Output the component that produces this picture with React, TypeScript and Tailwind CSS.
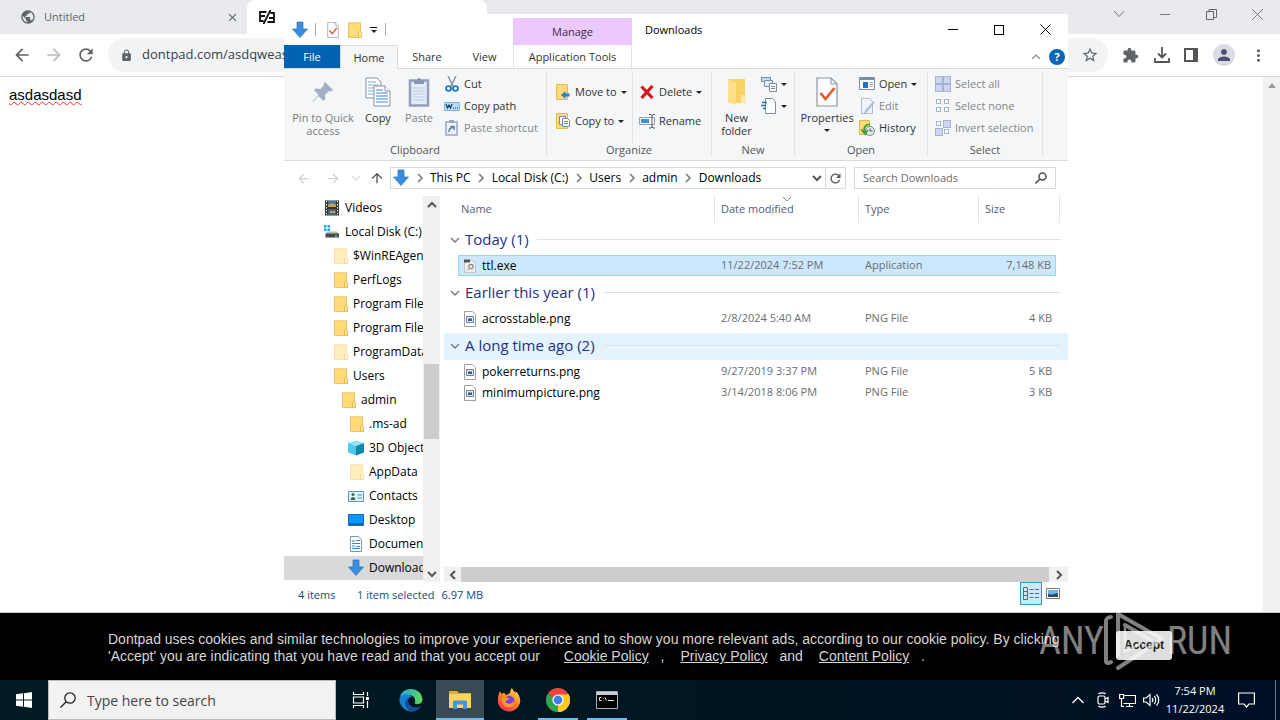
import type { ReactNode } from "react";
import {
  MdArrowBack,
  MdArrowForward,
  MdClose,
  MdExtension,
  MdLock,
  MdMoreVert,
  MdPerson,
  MdPublic,
  MdRefresh,
  MdStarBorder,
} from "react-icons/md";

type FolderItem = { name: string; icon: ReactNode; pad: string; active?: boolean };
type FileItem = { name: string; date: string; type: string; size: string; exe?: boolean; selected?: boolean };

/* ---------- icons ---------- */

function DownArrow({ className = "w-4 h-[18px]" }: { className?: string }) {
  return (
    <svg viewBox="0 0 16 18" className={className}>
      <path d="M5 1h6v7h4.5L8 16.5.5 8H5z" fill="#3a8ee0" stroke="#2a74c0" strokeWidth=".7" />
    </svg>
  );
}

function FolderIcon({ faded = false }: { faded?: boolean }) {
  return (
    <svg viewBox="0 0 14 16" className={`w-[14px] h-4 shrink-0 ${faded ? "opacity-50" : ""}`}>
      <path d="M.5.8h12v14.7H.5z" fill="#ffdc78" stroke="#e6b94b" strokeWidth=".8" />
      <path d="M10.5 11c0-2 3-2 3 0v4.6h-3z" fill="#ffe9a3" stroke="#e0ac35" strokeWidth=".8" />
    </svg>
  );
}

function Caret() {
  return (
    <svg viewBox="0 0 6 3" className="w-[6px] h-[3px] shrink-0">
      <path d="M0 0h6L3 3z" fill="#222" />
    </svg>
  );
}

function Chevron({ dir, className = "text-[#555]", width = 2 }: { dir: "up" | "down" | "left" | "right"; className?: string; width?: number }) {
  const paths = { up: "M1 7l4-4 4 4", down: "M1 3l4 4 4-4", left: "M7 1L3 5l4 4", right: "M3 1l4 4-4 4" };
  return (
    <svg viewBox="0 0 10 10" className={`w-[10px] h-[10px] shrink-0 ${className}`} fill="none" stroke="currentColor" strokeWidth={width}>
      <path d={paths[dir]} />
    </svg>
  );
}

function CheckDoc({ className }: { className: string }) {
  return (
    <svg viewBox="0 0 22 30" className={className} fill="none">
      <path d="M1 1h14l6 6v22H1z" fill="#fcfcfd" stroke="#8b96a5" strokeWidth="1.2" />
      <path d="M15 1v6h6" stroke="#8b96a5" />
      <path d="M4.500 16l5 6 9-11" stroke="#e0582f" strokeWidth="2.600" />
    </svg>
  );
}

function PinIcon() {
  return (
    <svg viewBox="0 0 24 24" className="w-6 h-6">
      <path d="M14 2l8 8-2 1.500-2-.5-4 4 .5 4-2 2-5-5L2 22l-.5-.5 6-6.500-4.500-5 2-1.500 4.500.5 3.500-4L12.500 4z" fill="#a3b0c3" />
    </svg>
  );
}

function CopyIcon() {
  return (
    <svg viewBox="0 0 26 30" className="w-[26px] h-[30px]" fill="#fff" stroke="#8292aa">
      <path d="M1 1h11l4 4v16H1z" />
      <path d="M3 5h8M3 8h11M3 11h11M3 14h11M3 17h11" stroke="#80a9dc" />
      <path d="M9 9h11l5 5v15H9z" />
      <path d="M20 9v5h5" />
      <path d="M11 13h7M11 16h12M11 19h12M11 22h12M11 25h12" stroke="#3f86dc" />
    </svg>
  );
}

function PasteIcon() {
  return (
    <svg viewBox="0 0 22 30" className="w-[22px] h-[30px]" fill="none">
      <path d="M2 3.500h18v25H2z" fill="#e3eaf8" stroke="#8fa0bb" strokeWidth="2.500" />
      <path d="M6 3h3l1-2h2l1 2h3v4H6z" fill="#8696ae" />
      <path d="M5 11h12M5 14h12M5 17h12M5 20h12M5 23h12" stroke="#bccbea" />
    </svg>
  );
}

function CutIcon() {
  return (
    <svg viewBox="0 0 16 16" className="w-4 h-4" fill="none">
      <path d="M4 0l5 10M12 0L7 10" stroke="#8190a2" strokeWidth="1.400" />
      <ellipse cx="4.500" cy="12.500" rx="2.500" ry="2.300" stroke="#1b7ac8" strokeWidth="1.800" />
      <ellipse cx="11.500" cy="12.500" rx="2.500" ry="2.300" stroke="#1b7ac8" strokeWidth="1.800" />
    </svg>
  );
}

function CopyPathIcon() {
  return (
    <svg viewBox="0 0 16 16" className="w-4 h-4" fill="none">
      <path d="M.5 4.500h15v8H.5z" fill="#b6dcfa" stroke="#7fb7e4" />
      <path d="M2 6l1.500 4L5 7l1.500 3L8 6M9 10h1M11 10h1M13 10h1" stroke="#1a3d68" strokeWidth="1.200" />
    </svg>
  );
}

function PasteShortcutIcon() {
  return (
    <svg viewBox="0 0 16 16" className="w-4 h-4" fill="none">
      <path d="M2 2h11v13H2z" fill="#edf1f9" stroke="#96a6c0" strokeWidth="1.500" />
      <path d="M5 0h5v3H5z" fill="#96a6c0" />
      <path d="M5 12c0-3 1-4.500 4-4.500M6.500 6.500H10V10" stroke="#5d7cab" strokeWidth="1.500" />
    </svg>
  );
}

function MoveToIcon() {
  return (
    <svg viewBox="0 0 14 16" className="w-[14px] h-4">
      <path d="M.5.500h11v15H.5z" fill="#ffdc78" stroke="#e6b94b" />
      <path d="M13.500 9.500h-4V7L5 11l4.500 4v-2.500h4z" fill="#2f7fc9" />
    </svg>
  );
}

function CopyToIcon() {
  return (
    <svg viewBox="0 0 14 16" className="w-[14px] h-4" fill="none">
      <path d="M.5.500h11v15H.5z" fill="#ffdc78" stroke="#e6b94b" />
      <path d="M3.500 3.500h6v8h-6z" fill="#fff" stroke="#7388a5" />
      <path d="M6.500 5.500h5l2 2v6h-7z" fill="#fff" stroke="#7388a5" />
      <path d="M8 8.500h4M8 10.500h4" stroke="#3f86dc" />
    </svg>
  );
}

function DeleteIcon() {
  return (
    <svg viewBox="0 0 14 14" className="w-[14px] h-[14px]">
      <path d="M1.500 1.500l11 11.500M12.500 1L1.500 13" stroke="#d3171e" strokeWidth="3.200" />
    </svg>
  );
}

function RenameIcon() {
  return (
    <svg viewBox="0 0 16 16" className="w-4 h-4" fill="none">
      <path d="M.5 4.500h15v7H.5z" fill="#fff" stroke="#8fa2ba" />
      <path d="M2 6h8v4H2z" fill="#3f8fd8" />
      <path d="M10 1.500h2l1 1 1-1h2M13 2v12M10 15h2l1-1 1 1h2" stroke="#4b5664" />
    </svg>
  );
}

function NewFolderIcon() {
  return (
    <svg viewBox="0 0 20 28" className="w-5 h-7">
      <path d="M2 1h16v24H2z" fill="#fbd064" />
      <path d="M1 1l8 4v22l-8-3z" fill="#ffe08a" />
      <path d="M14 17h5v8h-5z" fill="#ffe9a8" />
    </svg>
  );
}

function NewItemIcon() {
  return (
    <svg viewBox="0 0 16 16" className="w-4 h-4" fill="none" stroke="#7c8c9e">
      <path d="M.5 1.500h9v4h-9z" fill="#bcdcec" />
      <path d="M3.500 4.500h8v6h-8z" fill="#d9eef5" />
      <path d="M8.500 7.500h7v8h-7z" fill="#fff" />
      <path d="M10 10.500h4M10 12.500h4" />
    </svg>
  );
}

function EasyAccessIcon() {
  return (
    <svg viewBox="0 0 16 16" className="w-4 h-4" fill="none">
      <path d="M4.500.500h7l3 3v12h-10z" fill="#fff" stroke="#7c8c9e" />
      <path d="M1 4.500h5M0 7.500h5M2 10.500h2" stroke="#2b6fb8" strokeWidth="1.300" />
    </svg>
  );
}

function OpenIcon() {
  return (
    <svg viewBox="0 0 16 14" className="w-4 h-[14px]" fill="none">
      <path d="M.5.500h15v12H.5z" fill="#fff" stroke="#7c8da3" />
      <path d="M1 1h14v2H1z" fill="#7c8da3" />
      <path d="M4 5h5v6H4z" fill="#1574cf" />
      <path d="M10.500 5.500H14M10.500 7.500H14M10.500 9.500H14" stroke="#8fb3dc" />
    </svg>
  );
}

function EditIcon() {
  return (
    <svg viewBox="0 0 16 16" className="w-4 h-4" fill="none" stroke="#aebbd4">
      <path d="M2.500.500h8l3 3v12h-11z" fill="#eff3fb" />
      <path d="M15 4l-7 8-2 3" strokeWidth="2.200" />
    </svg>
  );
}

function HistoryIcon() {
  return (
    <svg viewBox="0 0 16 16" className="w-4 h-4" fill="none">
      <path d="M.5.500h10v14H.5z" fill="#ffdc78" stroke="#e6b94b" />
      <circle cx="11" cy="11" r="4.500" fill="#dfe6ea" stroke="#7f8b96" />
      <path d="M11 8.500V11h2.500" stroke="#555" />
      <path d="M11 4.500C6 4 4 8 6 13M2.500 9.500L6 14l3-4" stroke="#37a437" strokeWidth="1.800" />
    </svg>
  );
}

function SelectIcon({ filled }: { filled: number[] }) {
  const cells = [[1, 1], [9, 1], [1, 9], [9, 9]];
  return (
    <svg viewBox="0 0 16 16" className="w-4 h-4" stroke="#a5b3d3">
      {cells.map(([x, y], i) =>
        filled.includes(i) ? (
          <rect key={i} x={x - 0.5} y={y - 0.5} width="7" height="7" fill="#cbd5ee" />
        ) : (
          <rect key={i} x={x + 0.5} y={y + 0.5} width="4" height="4" fill="#fff" />
        )
      )}
    </svg>
  );
}

function VideosIcon() {
  return (
    <svg viewBox="0 0 14 16" className="w-[14px] h-4 shrink-0">
      <path d="M0 .500h14v15H0z" fill="#333" />
      <path d="M3 1h8v6H3z" fill="#3f74b8" />
      <path d="M3 9h8v6H3z" fill="#46627e" />
      <path d="M3 5l4-2 4 2v2H3zM5 11h5v2H5z" fill="#c7a53b" />
      <path d="M1.500 1v14M12.500 1v14" stroke="#fff" strokeDasharray="1.500 1.500" />
    </svg>
  );
}

function DiskIcon() {
  return (
    <svg viewBox="0 0 16 16" className="w-4 h-4 shrink-0">
      <path d="M0 1h2.500v2.500H0zM3.500 1H6v2.500H3.500zM0 4.500h2.500V7H0zM3.500 4.500H6V7H3.500z" fill="#1aa6e8" />
      <path d="M3 7.500h10l2 2.500H1.500z" fill="#b8bcc0" />
      <path d="M1.500 9.500H15v4H1.500z" fill="#45494d" />
      <path d="M11 11h2v1.500h-2z" fill="#43e05a" />
    </svg>
  );
}

function CubeIcon() {
  return (
    <svg viewBox="0 0 16 16" className="w-4 h-4 shrink-0">
      <path d="M8 .500l8 2.500-8 3-8-3z" fill="#8fe3f5" />
      <path d="M0 3l8 3v9.500l-8-3z" fill="#4ccbe8" />
      <path d="M16 3L8 6v9.500l8-3z" fill="#0f86ab" />
    </svg>
  );
}

function ContactsIcon() {
  return (
    <svg viewBox="0 0 16 16" className="w-4 h-4 shrink-0">
      <path d="M.5 3.500h15v10H.5z" fill="#e4f4fd" stroke="#5b93bd" />
      <circle cx="5" cy="6.500" r="1.600" fill="#3b6b55" />
      <path d="M2.500 12c0-4 5-4 5 0z" fill="#3b6b55" />
      <path d="M9.500 7H14M9.500 10H14" stroke="#4588c0" />
    </svg>
  );
}

function DesktopIcon() {
  return (
    <svg viewBox="0 0 16 16" className="w-4 h-4 shrink-0">
      <path d="M.5 2.500h15v11H.5z" fill="#1296f5" stroke="#0c6ec0" />
      <path d="M1 12h14" stroke="#0a5ba2" strokeWidth="1.500" />
    </svg>
  );
}

function DocumentsIcon() {
  return (
    <svg viewBox="0 0 12 16" className="w-3 h-4 shrink-0">
      <path d="M.5.500h8l3 3v12H.5z" fill="#fff" stroke="#8393a3" />
      <path d="M2 5h3M2 7.500h8M2 10h3M2 12.500h8M6 4.500h4M6 10.500h4" stroke="#3a84c9" strokeWidth="1.200" />
    </svg>
  );
}

function ImageFileIcon() {
  return (
    <svg viewBox="0 0 12 16" className="w-3 h-4 shrink-0" fill="none">
      <path d="M.5.500h8l3 3v12H.5z" fill="#fff" stroke="#9b9fa5" />
      <path d="M2.500 5.500h7v6h-7z" fill="#dcebf7" stroke="#6f7f94" />
      <path d="M4 10V8l1.500-1 1 1L8 7v3z" fill="#3d5a7c" />
    </svg>
  );
}

function ExeFileIcon() {
  return (
    <svg viewBox="0 0 12 14" className="w-3 h-[14px] shrink-0" fill="none">
      <path d="M.5 1.500h8l3 3v9H.5z" fill="#efefef" stroke="#c4c4c4" />
      <path d="M0 .500h6v3H0z" fill="#555" />
      <circle cx="7" cy="7.500" r="2.200" stroke="#888" strokeWidth="1.200" />
      <path d="M5 9.500l-2 2" stroke="#888" />
    </svg>
  );
}

function EdgeLogo() {
  return (
    <svg viewBox="0 0 24 24" className="w-6 h-6">
      <defs>
        <linearGradient id="edgeTop" x1="0" x2="1" y1=".3" y2=".5">
          <stop offset="0" stopColor="#25a8e0" />
          <stop offset="1" stopColor="#5fd65a" />
        </linearGradient>
      </defs>
      <path d="M1 9C3-2 22-2 23.500 11c.3 4-4 6-8 4.500 2-5-1-9-7-8.500C4 7.500 1 9 1 9z" fill="url(#edgeTop)" />
      <path d="M.5 11C1 7 9 4 13 8.500c-4 0-5 5-3 8.500 3 4 8 4 12 1-3 5-9 7-14 4.500C3 20 0 15 .5 11z" fill="#1b7fd2" />
      <path d="M9 10c-5 3-3 11 3 13.500 4 0 8-2 10-5.500-5 3-10 1-12-2-1-2-1-4-1-6z" fill="#0f4f9e" />
    </svg>
  );
}

function ExplorerLogo() {
  return (
    <svg viewBox="0 0 24 20" className="w-6 h-5">
      <path d="M1 1h8l2 2h12v4H1z" fill="#e8a72e" />
      <path d="M1 4h22v14H1z" fill="#ffd561" />
      <path d="M5 18v-6c0-1 .5-1.500 1.500-1.500h11c1 0 1.500.5 1.500 1.500v7h-4v-4.500H9V19H5z" fill="#3e9ad8" />
    </svg>
  );
}

function FirefoxLogo() {
  return (
    <svg viewBox="0 0 24 24" className="w-6 h-6">
      <defs>
        <linearGradient id="fox" x1=".8" x2=".2" y1="0" y2="1">
          <stop offset="0" stopColor="#ffe04a" />
          <stop offset=".45" stopColor="#ff8a1f" />
          <stop offset="1" stopColor="#f5245c" />
        </linearGradient>
      </defs>
      <path d="M3 3l1.500 3L7 4.500 9 7l4-2c0-3 2-5 2-5 1 3 3 4 4 5 0-1-.5-2-.5-2C22 6 24 11 23 15c-2 6-7 9-12 8.500C4 22.500 0 17 1 11c0-4 2-8 2-8z" fill="url(#fox)" />
      <circle cx="12.500" cy="13" r="5" fill="#7a3fe0" />
      <path d="M5 10c3-1 5 0 8 1-2 0-3 2-5 2 2 4 7 3 9 0 1 5-4 7-7 6-4-1-6-5-5-9z" fill="#ff9a24" />
    </svg>
  );
}

function ChromeLogo() {
  return (
    <svg viewBox="0 0 24 24" className="w-6 h-6">
      <path d="M12 12L1.600 6A12 12 0 0 1 22.400 6z" fill="#e8453c" />
      <path d="M12 12L22.400 6A12 12 0 0 1 12 24z" fill="#fdc821" />
      <path d="M12 12v12A12 12 0 0 1 1.600 6z" fill="#33a352" />
      <path d="M12 6.500h10.700A12 12 0 0 1 12 24l5-9z" fill="#fdc821" />
      <circle cx="12" cy="12" r="5.600" fill="#fff" />
      <circle cx="12" cy="12" r="4.400" fill="#3d7ff0" />
    </svg>
  );
}

function CmdLogo() {
  return (
    <svg viewBox="0 0 22 18" className="w-[22px] h-[18px]">
      <path d="M.5.500h21v17H.5z" fill="#000" stroke="#aab0b5" />
      <path d="M1 1h20v3H1z" fill="#c9ced2" />
      <path d="M5.500 6.500h-2v3h2M7.500 7v.5M7.500 9v.5M9 6.500l1.500 3M12 9.500h6" stroke="#e8e8e8" fill="none" />
    </svg>
  );
}

/* ---------- data ---------- */

const folders: FolderItem[] = [
  { name: "Videos", icon: <VideosIcon />, pad: "pl-[41px] gap-[6px]" },
  { name: "Local Disk (C:)", icon: <DiskIcon />, pad: "pl-[40px] gap-[5px]" },
  { name: "$WinREAgent", icon: <FolderIcon faded />, pad: "pl-[50px] gap-[5px]" },
  { name: "PerfLogs", icon: <FolderIcon />, pad: "pl-[50px] gap-[5px]" },
  { name: "Program Files", icon: <FolderIcon />, pad: "pl-[50px] gap-[5px]" },
  { name: "Program Files (x86)", icon: <FolderIcon />, pad: "pl-[50px] gap-[5px]" },
  { name: "ProgramData", icon: <FolderIcon faded />, pad: "pl-[50px] gap-[5px]" },
  { name: "Users", icon: <FolderIcon />, pad: "pl-[50px] gap-[5px]" },
  { name: "admin", icon: <FolderIcon />, pad: "pl-[58px] gap-[5px]" },
  { name: ".ms-ad", icon: <FolderIcon />, pad: "pl-[66px] gap-[5px]" },
  { name: "3D Objects", icon: <CubeIcon />, pad: "pl-16 gap-[5px]" },
  { name: "AppData", icon: <FolderIcon faded />, pad: "pl-[66px] gap-[5px]" },
  { name: "Contacts", icon: <ContactsIcon />, pad: "pl-16 gap-[5px]" },
  { name: "Desktop", icon: <DesktopIcon />, pad: "pl-16 gap-[5px]" },
  { name: "Documents", icon: <DocumentsIcon />, pad: "pl-[66px] gap-[7px]" },
  { name: "Downloads", icon: <DownArrow className="w-4 h-[18px] shrink-0" />, pad: "pl-16 gap-[5px]", active: true },
];

const groups: { label: string; hover?: boolean; files: FileItem[] }[] = [
  {
    label: "Today (1)",
    files: [{ name: "ttl.exe", date: "11/22/2024 7:52 PM", type: "Application", size: "7,148 KB", exe: true, selected: true }],
  },
  {
    label: "Earlier this year (1)",
    files: [{ name: "acrosstable.png", date: "2/8/2024 5:40 AM", type: "PNG File", size: "4 KB" }],
  },
  {
    label: "A long time ago (2)",
    hover: true,
    files: [
      { name: "pokerreturns.png", date: "9/27/2019 3:37 PM", type: "PNG File", size: "5 KB" },
      { name: "minimumpicture.png", date: "3/14/2018 8:06 PM", type: "PNG File", size: "3 KB" },
    ],
  },
];

const crumbs = ["This PC", "Local Disk (C:)", "Users", "admin", "Downloads"];

/* ---------- browser ---------- */

function BrowserTabs() {
  return (
    <div className="flex h-[34px] shrink-0 bg-[#e8eaed] text-[11px] text-[#5f6368]">
      <div className="flex w-[247px] items-center gap-2 pl-5 pr-[7px]">
        <MdPublic size={16} />
        <span className="flex-1">Untitled</span>
        <button aria-label="Close tab" className="flex w-4 justify-center"><MdClose size={13} /></button>
      </div>
      <div className="flex w-[240px] items-center gap-3 rounded-t-lg bg-white pl-3">
        <svg viewBox="0 0 16 14" className="h-[14px] w-4" fill="none" stroke="#111" strokeWidth="1.800">
          <path d="M7.500 2H1v9h3.500M1 6h5M8.500 12H15V3h-3.500M10 8h5M11.500 0L4.500 14" />
        </svg>
        <span className="pt-2">asdqweasdasd | Dontpad</span>
      </div>
      <div className="ml-auto flex items-center pb-[6px]">
        <button aria-label="Search tabs" className="flex w-[46px] justify-center">
          <svg viewBox="0 0 12 8" className="h-2 w-3" fill="none" stroke="#777"><path d="M1 1l5 5.500L11 1" /></svg>
        </button>
        <button aria-label="Minimize browser" className="flex w-[46px] justify-center"><span className="h-px w-[10px] bg-[#777]" /></button>
        <button aria-label="Restore browser" className="flex w-[46px] justify-center">
          <svg viewBox="0 0 11 11" className="size-[11px]" fill="none" stroke="#666"><path d="M.5 2.500h7v8h-7zM3 2.500v-2h7.500v8h-3" /></svg>
        </button>
        <button aria-label="Close browser" className="flex w-[46px] justify-center">
          <svg viewBox="0 0 11 11" className="size-[11px]" fill="none" stroke="#777"><path d="M0 0l11 11M11 0L0 11" /></svg>
        </button>
      </div>
    </div>
  );
}

function BrowserToolbar() {
  return (
    <div className="flex h-[43px] shrink-0 items-center border-b border-[#d5d7da] bg-white text-[#5f6368]">
      <div className="flex gap-3 pl-3 pr-3">
        <button aria-label="Back"><MdArrowBack size={20} /></button>
        <button aria-label="Forward" className="text-[#b9bbbe]"><MdArrowForward size={20} /></button>
        <button aria-label="Reload"><MdRefresh size={20} /></button>
      </div>
      <div className="flex h-[34px] flex-1 items-center rounded-full bg-[#f1f3f4] pl-3 pr-[9px]">
        <MdLock size={13} />
        <input aria-label="Address" defaultValue="dontpad.com/asdqweasdasd" className="ml-[9px] min-w-0 flex-1 bg-transparent text-[13px] text-[#3c4043] outline-none" />
        <button aria-label="Bookmark"><MdStarBorder size={18} /></button>
      </div>
      <div className="flex w-[172px] items-center justify-between pl-[14px] pr-3">
        <button aria-label="Extensions"><MdExtension size={17} /></button>
        <button aria-label="Downloads">
          <svg viewBox="0 0 16 16" className="size-4" fill="none" stroke="#555" strokeWidth="1.800"><path d="M8 0v10M4 6.500l4 4 4-4M1 11v4h14v-4" /></svg>
        </button>
        <button aria-label="Side panel">
          <svg viewBox="0 0 14 14" className="size-[14px]"><path d="M1 1h12v12H1z" fill="#fff" stroke="#555" strokeWidth="2" /><path d="M9 1h4v12H9z" fill="#555" /></svg>
        </button>
        <button aria-label="Profile" className="flex size-[22px] items-center justify-center rounded-full bg-[#dadce3] text-[#4d5270]"><MdPerson size={18} /></button>
        <button aria-label="Menu"><MdMoreVert size={19} /></button>
      </div>
    </div>
  );
}

function CookieBanner() {
  return (
    <div className="relative flex h-[68px] shrink-0 border-t border-[#c9c9c9] bg-black pl-[108px] pt-[18px] font-['Liberation_Sans',Arial,sans-serif] text-[14px] leading-[17px] text-[#d6d6d6]">
      <p className="w-[1008px] whitespace-nowrap">
        Dontpad uses cookies and similar technologies to improve your experience and to show you more relevant ads, according to our cookie policy. By clicking
        <br />
        'Accept' you are indicating that you have read and that you accept our
        <a href="#cookie" className="ml-6 mr-2 underline">Cookie Policy</a> ,
        <a href="#privacy" className="ml-4 mr-2 underline">Privacy Policy</a> and
        <a href="#content" className="ml-4 mr-2 underline">Content Policy</a> .
      </p>
      <button className="h-[29px] w-14 shrink-0 rounded-[3px] bg-[#dedede] text-[12px] font-bold text-[#222]">Accept</button>
      <Watermark />
    </div>
  );
}

function Watermark() {
  return (
    <div className="pointer-events-none absolute right-[48px] -top-[4px] flex h-[64px] w-[193px] items-center justify-between font-['Liberation_Sans_Narrow','Roboto_Condensed','DejaVu_Sans_Condensed',sans-serif] text-[38px] leading-[64px] text-white opacity-50">
      <span>ANY</span>
      <svg viewBox="0 0 64 64" className="-ml-[2px] h-[64px] w-[64px]" fill="none" stroke="#fff" strokeWidth="4" strokeLinejoin="round" strokeLinecap="round">
        <path d="M16 46V5l44 25-44 29" />
        <path d="M23 16l26 15" />
        <path d="M9 8c-3 0-5 2-5 4v40c0 2 2 3 5 1" />
        <path d="M23 16v27l16-9" strokeWidth="2.500" />
      </svg>
      <span>RUN</span>
    </div>
  );
}

/* ---------- explorer ---------- */

function TitleBar() {
  return (
    <div className="flex h-[31px] shrink-0">
      <div className="flex w-[229px] items-center pl-2">
        <DownArrow />
        <span className="ml-[7px] h-[13px] w-px bg-[#aaa]" />
        <CheckDoc className="ml-[11px] h-4 w-[12px]" />
        <span className="ml-[9px]"><FolderIcon /></span>
        <button aria-label="Customize toolbar" className="ml-[7px] flex w-[9px] flex-col items-center gap-[2px]">
          <span className="h-px w-[7px] bg-black" />
          <Caret />
        </button>
        <span className="ml-[7px] h-[13px] w-px bg-[#aaa]" />
      </div>
      <div className="mt-1 w-[119px] bg-[#ebc9fc] text-center text-[11px] leading-[28px] text-[#3a2b45]">Manage</div>
      <h1 className="ml-[13px] flex-1 text-[11px] leading-[31px]">Downloads</h1>
      <button aria-label="Minimize" className="flex w-[46px] items-center justify-center"><span className="h-px w-[10px] bg-black" /></button>
      <button aria-label="Maximize" className="flex w-[46px] items-center justify-center"><span className="size-[10px] border border-black" /></button>
      <button aria-label="Close" className="flex w-[46px] items-center justify-center">
        <svg viewBox="0 0 11 11" className="size-[11px]" stroke="#000"><path d="M.5.500l10 10M10.500.500l-10 10" /></svg>
      </button>
    </div>
  );
}

function RibbonTabs() {
  return (
    <div className="flex h-6 shrink-0 border-b border-[#dadbdc] text-center text-[11px] leading-[24px] text-[#333]">
      <button className="w-14 bg-[#0063b1] text-white">File</button>
      <button className="-mb-px w-[58px] border border-b-0 border-[#dadbdc] bg-[#f5f6f7] leading-[22px]">Home</button>
      <button className="w-[58px]">Share</button>
      <button className="w-[57px]">View</button>
      <button className="w-[119px] border-x border-[#e6dcec]">Application Tools</button>
      <div className="ml-auto flex items-center gap-2 pr-[3px]">
        <button aria-label="Collapse ribbon" className="flex"><Chevron dir="up" className="text-[#999]" width={1.5} /></button>
        <button aria-label="Help" className="size-4 rounded-full bg-[#0a66b8] font-bold leading-4 text-white">?</button>
      </div>
    </div>
  );
}

function RibbonGroup({ label, width, children }: { label: string; width: string; children: ReactNode }) {
  return (
    <section className={`my-[3px] flex shrink-0 flex-col border-r border-[#e2e3e4] ${width}`}>
      <div className="flex flex-1 pt-px">{children}</div>
      <h2 className="text-center leading-[14px] text-[#555]">{label}</h2>
    </section>
  );
}

function BigButton({ icon, width, muted, children }: { icon: ReactNode; width: string; muted?: boolean; children: ReactNode }) {
  return (
    <button className={`flex flex-col items-center leading-[13px] ${width} ${muted ? "text-[#7d7d7d]" : "text-[#333]"}`}>
      <span className="flex h-[38px] items-center">{icon}</span>
      {children}
    </button>
  );
}

function SmallButton({ icon, muted, caret, children }: { icon: ReactNode; muted?: boolean; caret?: boolean; children?: ReactNode }) {
  return (
    <button className={`flex h-[22px] items-center gap-1 whitespace-nowrap ${muted ? "text-[#868686]" : "text-[#333]"}`}>
      <span className="flex w-4 justify-center">{icon}</span>
      {children}
      {caret && <Caret />}
    </button>
  );
}

function Ribbon() {
  return (
    <div className="flex h-[92px] shrink-0 overflow-hidden border-b border-[#dadbdc] bg-[#f5f6f7] text-[11px]">
      <RibbonGroup label="Clipboard" width="w-[263px]">
        <BigButton icon={<PinIcon />} width="w-[78px]" muted>Pin to Quick<br />access</BigButton>
        <BigButton icon={<CopyIcon />} width="w-[32px]">Copy</BigButton>
        <BigButton icon={<PasteIcon />} width="w-[50px]" muted>Paste</BigButton>
        <div>
          <SmallButton icon={<CutIcon />}>Cut</SmallButton>
          <SmallButton icon={<CopyPathIcon />}>Copy path</SmallButton>
          <SmallButton icon={<PasteShortcutIcon />} muted>Paste shortcut</SmallButton>
        </div>
      </RibbonGroup>
      <RibbonGroup label="Organize" width="w-[165px]">
        <div className="flex w-[86px] flex-col gap-[7px] border-r border-[#e2e3e4] pl-2 pt-2">
          <SmallButton icon={<MoveToIcon />} caret>Move to</SmallButton>
          <SmallButton icon={<CopyToIcon />} caret>Copy to</SmallButton>
        </div>
        <div className="flex flex-col gap-[7px] pl-[6px] pt-2">
          <SmallButton icon={<DeleteIcon />} caret>Delete</SmallButton>
          <SmallButton icon={<RenameIcon />}>Rename</SmallButton>
        </div>
      </RibbonGroup>
      <RibbonGroup label="New" width="w-[83px]">
        <BigButton icon={<NewFolderIcon />} width="w-[49px]">New<br />folder</BigButton>
        <div>
          <SmallButton icon={<NewItemIcon />} caret />
          <SmallButton icon={<EasyAccessIcon />} caret />
        </div>
      </RibbonGroup>
      <RibbonGroup label="Open" width="w-[133px]">
        <BigButton icon={<CheckDoc className="h-[30px] w-[22px]" />} width="w-[64px]">
          Properties
          <span className="mt-[5px]"><Caret /></span>
        </BigButton>
        <div>
          <SmallButton icon={<OpenIcon />} caret>Open</SmallButton>
          <SmallButton icon={<EditIcon />} muted>Edit</SmallButton>
          <SmallButton icon={<HistoryIcon />}>History</SmallButton>
        </div>
      </RibbonGroup>
      <RibbonGroup label="Select" width="w-[115px]">
        <div className="pl-[7px]">
          <SmallButton icon={<SelectIcon filled={[0, 1, 2, 3]} />} muted>Select all</SmallButton>
          <SmallButton icon={<SelectIcon filled={[]} />} muted>Select none</SmallButton>
          <SmallButton icon={<SelectIcon filled={[1, 2]} />} muted>Invert selection</SmallButton>
        </div>
      </RibbonGroup>
    </div>
  );
}

function AddressBar() {
  return (
    <div className="flex h-[35px] shrink-0 items-center pb-px pr-3 text-[12px]">
      <div className="flex w-[106px] items-center pl-3">
        <button aria-label="Back" className="text-[#d0d0d0]"><MdArrowBack size={15} /></button>
        <button aria-label="Forward" className="ml-[15px] text-[#d0d0d0]"><MdArrowForward size={15} /></button>
        <button aria-label="Recent" className="ml-[10px]"><Chevron dir="down" className="text-[#dcdcdc]" width={1.5} /></button>
        <button aria-label="Up" className="ml-2 rotate-90 text-[#555]"><MdArrowBack size={16} /></button>
      </div>
      <nav className="flex h-[22px] flex-1 items-center border border-[#d9d9d9] pl-[2px]">
        <DownArrow className="h-[18px] w-4 shrink-0" />
        {crumbs.map((crumb) => (
          <span key={crumb} className="flex items-center whitespace-nowrap">
            <span className="flex w-[21px] justify-center"><Chevron dir="right" className="text-[#777]" width={1.5} /></span>
            <a href="#path">{crumb}</a>
          </span>
        ))}
        <button aria-label="Previous locations" className="ml-auto pr-[3px]"><Chevron dir="down" /></button>
        <button aria-label="Refresh" className="flex h-full w-5 items-center justify-center border-l border-[#d9d9d9] text-[#555]">
          <MdRefresh size={15} />
        </button>
      </nav>
      <div className="ml-2 flex h-[22px] w-[202px] items-center border border-[#d9d9d9] px-2">
        <input aria-label="Search Downloads" placeholder="Search Downloads" className="min-w-0 flex-1 text-[11px] outline-none placeholder:text-[#6d6d6d]" />
        <svg viewBox="0 0 12 12" className="size-3" fill="none" stroke="#555" strokeWidth="1.600"><circle cx="7.500" cy="4.500" r="3.500" /><path d="M5 7L.5 11.500" /></svg>
      </div>
    </div>
  );
}

function FolderTree() {
  return (
    <div className="flex w-[156px] shrink-0">
      <ul className="w-[139px] overflow-hidden text-[12px]">
        {folders.map((f) => (
          <li key={f.name} className={`flex h-6 items-center whitespace-nowrap ${f.pad} ${f.active ? "bg-[#d9d9d9]" : ""}`}>
            {f.icon}
            {f.name}
          </li>
        ))}
      </ul>
      <div className="flex w-[17px] flex-col items-center bg-[#f0f0f0]">
        <button aria-label="Scroll up" className="flex h-[17px] items-center"><Chevron dir="up" /></button>
        <div className="mt-[151px] h-[75px] w-[15px] bg-[#cdcdcd]" />
        <button aria-label="Scroll down" className="mt-auto flex h-[17px] items-center"><Chevron dir="down" /></button>
      </div>
    </div>
  );
}

function FileTable() {
  return (
    <table className="w-full table-fixed border-separate border-spacing-0 text-left text-[11px] text-[#6d6d6d]">
      <colgroup>
        <col className="w-[14px]" />
        <col />
        <col className="w-[144px]" />
        <col className="w-[120px]" />
        <col className="w-[77px]" />
        <col className="w-1" />
        <col className="w-2" />
      </colgroup>
      <thead>
        <tr className="h-[27px] text-[#4c607a]">
          <th colSpan={2} className="border-r border-[#e5e5e5] p-0 pl-[17px] font-normal">Name</th>
          <th className="relative border-r border-[#e5e5e5] p-0 pl-[6px] font-normal">
            Date modified
            <span className="absolute -top-[2px] left-[67px]"><Chevron dir="down" className="text-[#888]" width={1} /></span>
          </th>
          <th className="border-r border-[#e5e5e5] p-0 pl-[6px] font-normal">Type</th>
          <th colSpan={2} className="border-r border-[#e5e5e5] p-0 pl-[6px] font-normal">Size</th>
          <th className="p-0" />
        </tr>
      </thead>
      {groups.map((group) => (
        <tbody key={group.label}>
          <tr>
            <th colSpan={7} className="p-0 pb-px pt-1 font-normal">
              <div className={`flex h-[27px] items-center pb-[2px] pl-[6px] pr-[7px] text-[15px] text-[#1e3287] ${group.hover ? "bg-[#e5f3ff]" : ""}`}>
                <Chevron dir="down" className="text-[#777]" width={1.4} />
                <span className="ml-[5px]">{group.label}</span>
                <span className="ml-2 h-px flex-1 bg-[#dfe3e8]" />
              </div>
            </th>
          </tr>
          {group.files.map((file) => {
            const cell = file.selected ? "border-y border-[#99d1ff] bg-[#cce8ff]" : "";
            return (
              <tr key={file.name} className="h-[21px]">
                <td className="p-0" />
                <td className={`p-0 ${cell} ${file.selected ? "border-l pl-[5px]" : "pl-[6px]"}`}>
                  <div className="flex items-center gap-[6px] text-[12px] leading-[18px] text-black">
                    {file.exe ? <ExeFileIcon /> : <ImageFileIcon />}
                    {file.name}
                  </div>
                </td>
                <td className={`p-0 pl-[6px] ${cell}`}>{file.date}</td>
                <td className={`p-0 pl-[6px] ${cell}`}>{file.type}</td>
                <td className={`p-0 pr-1 text-right ${cell} ${file.selected ? "border-r" : ""}`}>{file.size}</td>
                <td className="p-0" />
                <td className="p-0" />
              </tr>
            );
          })}
        </tbody>
      ))}
    </table>
  );
}

function ExplorerWindow() {
  return (
    <div className="absolute bottom-[108px] left-[284px] right-[212px] top-[14px] flex flex-col overflow-hidden bg-white">
      <TitleBar />
      <RibbonTabs />
      <Ribbon />
      <AddressBar />
      <div className="flex min-h-0 flex-1">
        <FolderTree />
        <div className="ml-1 flex min-w-0 flex-1 flex-col">
          <div className="min-h-0 flex-1 overflow-hidden"><FileTable /></div>
          <div className="flex h-[15px] bg-[#f0f0f0]">
            <button aria-label="Scroll left" className="flex w-[17px] items-center justify-center"><Chevron dir="left" /></button>
            <div className="flex-1 bg-[#cdcdcd]" />
            <button aria-label="Scroll right" className="flex w-[19px] items-center justify-center"><Chevron dir="right" /></button>
          </div>
        </div>
      </div>
      <div className="flex h-[30px] shrink-0 items-start pl-[14px] pr-2 text-[11px] leading-[26px] text-[#24467c]">
        <span className="w-[59px]">4 items</span>
        <span>1 item selected</span>
        <span className="ml-[7px]">6.97 MB</span>
        <div className="ml-auto flex items-center gap-1">
          <button aria-label="Details view" className="flex h-[23px] w-[22px] items-center justify-center border border-[#3399c8] bg-[#c9eafa]">
            <svg viewBox="0 0 16 13" className="h-[13px] w-4" fill="none" stroke="#667"><path d="M.5.500h4v12h-4zM.5 4.500h4M.5 8.500h4M6.500 2.500h4M12 2.500h4M6.500 6.500h4M12 6.500h4M6.500 10.500h4M12 10.500h4" /></svg>
          </button>
          <button aria-label="Large icons view">
            <svg viewBox="0 0 14 11" className="h-[11px] w-[14px]"><path d="M.5.500h13v10H.5z" fill="#fff" stroke="#777" /><path d="M2 2h10v7H2z" fill="#6fb1e8" /><path d="M2 6l4 .5 6-1.500v4H2z" fill="#24506f" /></svg>
          </button>
        </div>
      </div>
    </div>
  );
}

/* ---------- taskbar ---------- */

function TaskButton({ label, open, active, children }: { label: string; open?: boolean; active?: boolean; children: ReactNode }) {
  return (
    <button aria-label={label} className={`relative flex h-full w-12 items-center justify-center ${active ? "bg-[#384a54]" : ""}`}>
      {children}
      {active && <span className="absolute bottom-0 h-[2px] w-12 bg-[#76b9ed]" />}
      {open && <span className="absolute bottom-0 h-[2px] w-10 bg-[#76b9ed]" />}
    </button>
  );
}

function Taskbar() {
  return (
    <div className="flex h-10 shrink-0 bg-linear-to-r from-[#001a22] via-[#001620] to-[#000f26] text-white">
      <button aria-label="Start" className="flex w-12 items-center justify-center">
        <svg viewBox="0 0 16 16" className="size-4" fill="#fff"><path d="M0 2.300L7 1.300v6.300H0zM8 1.200L16 0v7.600H8zM0 8.400h7v6.300l-7-1zM8 8.400h8V16l-8-1.200z" /></svg>
      </button>
      <label className="flex w-[288px] items-center border border-[#b9bcbe] bg-[#f2f2f2] pl-[11px]">
        <svg viewBox="0 0 16 16" className="size-4" fill="none" stroke="#222" strokeWidth="1.300"><circle cx="10" cy="6" r="5.200" /><path d="M6.200 9.800L.5 15.500" /></svg>
        <input aria-label="Type here to search" placeholder="Type here to search" className="ml-[11px] min-w-0 flex-1 bg-transparent text-[14px] outline-none placeholder:text-[#444]" />
      </label>
      <TaskButton label="Task view">
        <svg viewBox="0 0 17 16" className="h-4 w-[17px]" fill="none" stroke="#fff" strokeWidth="1.200"><path d="M1.500 0v2.500h10V0M1.500 5h10v6h-10zM1.500 16v-2.500h10V16M15.500 0v4M15.500 9v7" /><path d="M14.500 5.500h2v2h-2z" fill="#fff" /></svg>
      </TaskButton>
      <div className="ml-[3px] flex gap-px">
        <TaskButton label="Edge"><EdgeLogo /></TaskButton>
        <TaskButton label="File Explorer" active><ExplorerLogo /></TaskButton>
        <TaskButton label="Firefox"><FirefoxLogo /></TaskButton>
        <TaskButton label="Chrome" open><ChromeLogo /></TaskButton>
        <TaskButton label="Command Prompt" open><CmdLogo /></TaskButton>
      </div>
      <div className="ml-auto flex items-center">
        <svg viewBox="0 0 12 8" className="mr-[12px] h-2 w-3" fill="none" stroke="#fff" strokeWidth="1.300"><path d="M.5 7L6 1.500 11.500 7" /></svg>
        <svg viewBox="0 0 14 16" className="mr-[9px] h-4 w-[14px]" fill="none" stroke="#fff" strokeWidth="1.200"><rect x="2" y="4" width="7" height="8" rx="1.500" /><path d="M9 7l3-1.500v5L9 9M2.500 2C4 .5 8 .5 9.500 2M2.500 14c1.500 1.500 5.500 1.500 7 0" /></svg>
        <svg viewBox="0 0 17 16" className="mr-[7px] h-4 w-[17px]" fill="none" stroke="#fff" strokeWidth="1.200"><path d="M5.500 3.500h11v8H4.500M10.500 11.500v3M7 14.500h7M.6 2.500h4v4h-4zM2.500 6.500v8H5" /></svg>
        <svg viewBox="0 0 17 16" className="h-4 w-[17px]" fill="none" stroke="#fff" strokeWidth="1.200"><path d="M.6 6h2.500L7 2.500v11L3.100 10H.6zM9 6c1 1.200 1 3 0 4M11.200 4c2 2 2 6 0 8M13.500 2.500c3 3 3 8 0 11" /></svg>
        <div className="w-[70px] text-center text-[11px] leading-[18px]">7:54 PM<br />11/22/2024</div>
        <button aria-label="Notifications" className="mx-2 mr-[20px]">
          <svg viewBox="0 0 17 16" className="h-4 w-[17px]" fill="none" stroke="#fff" strokeWidth="1.200"><path d="M.6 1h15.800v11H11l-2.500 3L6 12H.6z" /></svg>
        </button>
        <span className="mr-1 h-10 w-px bg-[#6d757c]" />
      </div>
    </div>
  );
}

export default function App() {
  return (
    <div className="relative flex h-screen flex-col overflow-hidden bg-white font-['Open_Sans','Noto_Sans',sans-serif] text-black">
      <BrowserTabs />
      <BrowserToolbar />
      <div className="flex min-h-0 flex-1">
        <textarea
          aria-label="Note"
          spellCheck={false}
          defaultValue="asdasdasd"
          className="flex-1 resize-none p-[9px] font-['Liberation_Sans',Arial,sans-serif] text-[15px] leading-[18px] underline decoration-[#e33] decoration-wavy decoration-1 outline-none"
        />
        <div className="flex w-[17px] justify-center bg-[#f1f1f1] pt-[6px]">
          <svg viewBox="0 0 8 5" className="h-[5px] w-2"><path d="M0 5h8L4 0z" fill="#999" /></svg>
        </div>
      </div>
      <CookieBanner />
      <Taskbar />
      <ExplorerWindow />
    </div>
  );
}
